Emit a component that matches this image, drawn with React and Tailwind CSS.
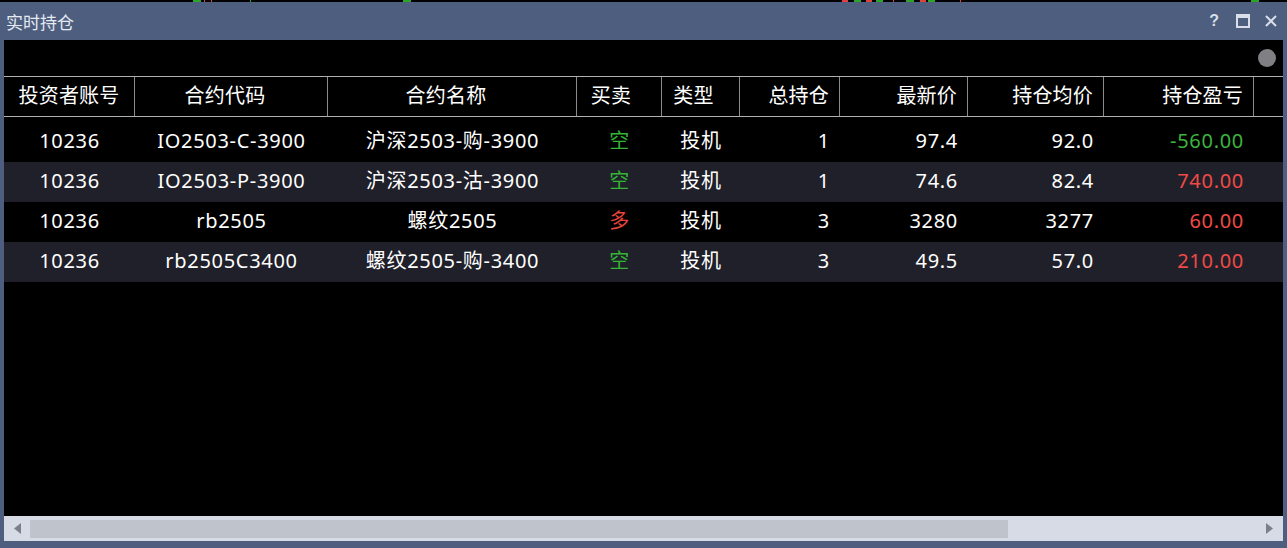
import React from "react";

const font = { fontFamily: '"Noto Sans", "Noto Sans CJK SC", sans-serif' };

const rows = [
  { acc: "10236", code: "IO2503-C-3900", name: "沪深2503-购-3900", side: "空", type: "投机", qty: "1", last: "97.4", avg: "92.0", pnl: "-560.00", dark: false },
  { acc: "10236", code: "IO2503-P-3900", name: "沪深2503-沽-3900", side: "空", type: "投机", qty: "1", last: "74.6", avg: "82.4", pnl: "740.00", dark: true },
  { acc: "10236", code: "rb2505", name: "螺纹2505", side: "多", type: "投机", qty: "3", last: "3280", avg: "3277", pnl: "60.00", dark: false },
  { acc: "10236", code: "rb2505C3400", name: "螺纹2505-购-3400", side: "空", type: "投机", qty: "3", last: "49.5", avg: "57.0", pnl: "210.00", dark: true },
];

const grid = "grid grid-cols-[131px_193px_249px_85px_78px_100px_128px_136px_150px_1fr]";

export default function App() {
  return (
    <div className="w-[1287px] h-[548px] bg-black flex flex-col overflow-hidden text-white" style={font}>
      <div className="h-[2px] relative bg-black shrink-0">
        <span className="absolute left-[193px] top-0 h-[2px] w-[8px] bg-[#2aa52a]" />
        <span className="absolute left-[204px] top-0 h-[2px] w-[1px] bg-[#e04040]" />
        <span className="absolute left-[211px] top-0 h-[2px] w-[1px] bg-[#e04040]" />
        <span className="absolute left-[250px] top-0 h-[2px] w-[1px] bg-[#2aa52a]" />
        <span className="absolute left-[403px] top-0 h-[2px] w-[8px] bg-[#2aa52a]" />
        <span className="absolute left-[842px] top-0 h-[2px] w-[6px] bg-[#e04040]" />
        <span className="absolute left-[854px] top-0 h-[2px] w-[7px] bg-[#2aa52a]" />
        <span className="absolute left-[866px] top-0 h-[2px] w-[6px] bg-[#e04040]" />
        <span className="absolute left-[876px] top-0 h-[2px] w-[7px] bg-[#2aa52a]" />
        <span className="absolute left-[893px] top-0 h-[2px] w-[1px] bg-[#e04040]" />
        <span className="absolute left-[906px] top-0 h-[2px] w-[8px] bg-[#2aa52a]" />
        <span className="absolute left-[920px] top-0 h-[2px] w-[6px] bg-[#e04040]" />
        <span className="absolute left-[928px] top-0 h-[2px] w-[7px] bg-[#2aa52a]" />
        <span className="absolute left-[960px] top-0 h-[2px] w-[1px] bg-[#e04040]" />
        <span className="absolute left-[1251px] top-0 h-[2px] w-[8px] bg-[#2aa52a]" />
      </div>
      <div className="flex-1 bg-[#4d5e7f] flex flex-col pl-[4px] pr-[4px] pb-[7px]">
        <div className="h-[38px] shrink-0 flex items-center">
          <span className="pl-[2px] text-[17px] text-[#e6eaf2] leading-none" style={{ fontFamily: '"Noto Sans CJK SC", sans-serif' }}>实时持仓</span>
          <div className="ml-auto flex items-center text-[#d9dee8]">
            <span className="text-[16px] font-bold leading-none mr-[17px]" style={{ fontFamily: '"Liberation Sans", sans-serif' }}>?</span>
            <svg width="14" height="14" viewBox="0 0 14 14" className="mr-[15px]">
              <rect x="1" y="1" width="12" height="12" fill="none" stroke="#d9dee8" strokeWidth="2" />
              <rect x="1" y="1" width="12" height="3" fill="#d9dee8" />
            </svg>
            <svg width="12" height="12" viewBox="0 0 12 12" className="mr-[6px]">
              <path d="M1 1 L11 11 M11 1 L1 11" stroke="#d9dee8" strokeWidth="2" />
            </svg>
          </div>
        </div>
        <div className="flex-1 bg-black flex flex-col min-h-0">
          <div className="h-[36px] shrink-0 flex items-center justify-end pr-[7px]">
            <span className="w-[18px] h-[18px] rounded-full bg-[#807f84] block" />
          </div>
          <div className={`${grid} h-[41px] shrink-0 border-t border-b border-[#b0b0b0] text-[20px] leading-none tracking-[0.2px]`}>
            <div className="border-r border-[#8a8a8a] flex items-center justify-center pb-[1px]">投资者账号</div>
            <div className="border-r border-[#8a8a8a] flex items-center justify-center pr-[12px] pb-[1px]">合约代码</div>
            <div className="border-r border-[#8a8a8a] flex items-center justify-center pr-[12px] pb-[1px]">合约名称</div>
            <div className="border-r border-[#8a8a8a] flex items-center justify-center pr-[16px] pb-[1px]">买卖</div>
            <div className="border-r border-[#8a8a8a] flex items-center justify-center pr-[14px] pb-[1px]">类型</div>
            <div className="border-r border-[#8a8a8a] flex items-center justify-end pr-[10px] pb-[1px]">总持仓</div>
            <div className="border-r border-[#8a8a8a] flex items-center justify-end pr-[10px] pb-[1px]">最新价</div>
            <div className="border-r border-[#8a8a8a] flex items-center justify-end pr-[10px] pb-[1px]">持仓均价</div>
            <div className="border-r border-[#8a8a8a] flex items-center justify-end pr-[10px] pb-[1px]">持仓盈亏</div>
            <div />
          </div>
          <div className="h-[5px] shrink-0" />
          {rows.map((r, i) => (
            <div key={i} className={`${grid} h-[40px] shrink-0 text-[20px] leading-none tracking-[0.7px] ${r.dark ? "bg-[#1f2029]" : "bg-black"}`}>
              <div className="flex items-center justify-center pb-[3px]">{r.acc}</div>
              <div className="flex items-center justify-center pb-[3px]">{r.code}</div>
              <div className="flex items-center justify-center pb-[3px]">{r.name}</div>
              <div className={`flex items-center justify-center pb-[3px] ${r.side === "多" ? "text-[#e8453c]" : "text-[#35b435]"}`}>{r.side}</div>
              <div className="flex items-center justify-center pb-[3px]">{r.type}</div>
              <div className="flex items-center justify-end pr-[10px] pb-[3px]">{r.qty}</div>
              <div className="flex items-center justify-end pr-[10px] pb-[3px]">{r.last}</div>
              <div className="flex items-center justify-end pr-[10px] pb-[3px]">{r.avg}</div>
              <div className={`flex items-center justify-end pr-[10px] pb-[3px] ${r.pnl.startsWith("-") ? "text-[#3cb43c]" : "text-[#f04a46]"}`}>{r.pnl}</div>
              <div />
            </div>
          ))}
          <div className="flex-1" />
          <div className="h-[25px] shrink-0 bg-[#d6dbe6] flex items-center">
            <div className="w-[26px] flex items-center justify-center pl-[2px]">
              <svg width="8" height="11" viewBox="0 0 8 11"><path d="M7 0 L0 5.5 L7 11 Z" fill="#7b7f89" /></svg>
            </div>
            <div className="w-[978px] h-[18px] bg-[#bfc3cb]" />
            <div className="flex-1" />
            <div className="w-[26px] flex items-center justify-center pr-[2px]">
              <svg width="8" height="11" viewBox="0 0 8 11"><path d="M1 0 L8 5.5 L1 11 Z" fill="#7b7f89" /></svg>
            </div>
          </div>
        </div>
      </div>
    </div>
  );
}
